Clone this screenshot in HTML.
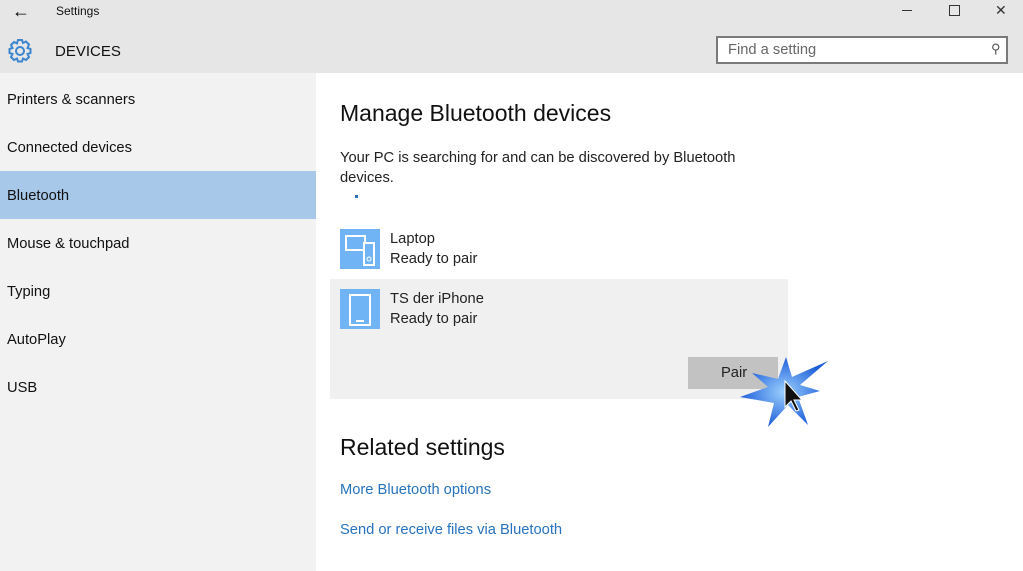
<!DOCTYPE html>
<html><head><style>
body{margin:0;width:1023px;height:571px;overflow:hidden;background:#fff;font-family:"Liberation Sans",sans-serif;position:relative}
.a{position:absolute}
.top{left:0;top:0;width:1023px;height:73px;background:#e6e6e6}
.side{left:0;top:73px;width:316px;height:498px;background:#f2f2f2}
.nav{left:7px;font-size:14.7px;color:#111}
.sel{left:0;top:171px;width:316px;height:48px;background:#a7c8e9}
.ic{width:40px;height:40px;background:#70b4f5}
.t{font-size:14.7px;color:#222}
.lk{font-size:14.7px;color:#2773bd}
</style></head><body>
<div class="a top"></div>
<div class="a side"></div>
<div class="a" style="left:12px;top:1px;font-size:18px">←</div>
<div class="a" style="left:56px;top:4px;font-size:12px;color:#111">Settings</div>
<div class="a" style="left:902px;top:10px;width:10px;height:1px;background:#333"></div>
<div class="a" style="left:949px;top:5px;width:9px;height:9px;border:1px solid #333"></div>
<div class="a" style="left:995px;top:2px;font-size:14px;color:#333">✕</div>
<svg class="a" style="left:7px;top:38px" width="26" height="26" viewBox="0 0 26 26"><g fill="none" stroke="#3c86cf" stroke-width="2"><circle cx="13" cy="13" r="4"/><path d="M11 2h4l1 3 3-1.5 3 3L20.5 10l3 1v4l-3 1 1.5 3-3 3-3-1.5-1 3h-4l-1-3-3 1.5-3-3L5.5 16l-3-1v-4l3-1L4 7l3-3 3 1.5z"/></g></svg>
<div class="a" style="left:55px;top:43px;font-size:15px;color:#111">DEVICES</div>
<div class="a" style="left:716px;top:36px;width:292px;height:28px;border:2px solid #7a7a7a;background:#fff;box-sizing:border-box"></div>
<div class="a" style="left:728px;top:42px;font-size:14.7px;color:#666">Find a setting</div>
<div class="a" style="left:991px;top:41px;font-size:13px;color:#555">⚲</div>
<div class="a sel"></div>
<div class="a nav" style="top:92px">Printers &amp; scanners</div>
<div class="a nav" style="top:140px">Connected devices</div>
<div class="a nav" style="top:188px">Bluetooth</div>
<div class="a nav" style="top:236px">Mouse &amp; touchpad</div>
<div class="a nav" style="top:284px">Typing</div>
<div class="a nav" style="top:332px">AutoPlay</div>
<div class="a nav" style="top:380px">USB</div>
<div class="a" style="left:340px;top:100px;font-size:23px;color:#111">Manage Bluetooth devices</div>
<div class="a t" style="left:340px;top:148px;width:410px;line-height:20px">Your PC is searching for and can be discovered by Bluetooth devices.</div>
<div class="a" style="left:355px;top:195px;width:3px;height:3px;background:#2773bd"></div>
<div class="a ic" style="left:340px;top:229px"><svg width="40" height="40"><rect x="6" y="7" width="19" height="14" fill="none" stroke="#fff" stroke-width="2"/><rect x="24" y="14" width="10" height="22" fill="#70b4f5" stroke="#fff" stroke-width="2"/><circle cx="29" cy="30" r="2" fill="none" stroke="#fff"/></svg></div>
<div class="a t" style="left:390px;top:231px">Laptop</div>
<div class="a t" style="left:390px;top:251px">Ready to pair</div>
<div class="a" style="left:330px;top:279px;width:458px;height:120px;background:#f0f0f0"></div>
<div class="a ic" style="left:340px;top:289px"><svg width="40" height="40"><rect x="10" y="6" width="20" height="30" fill="none" stroke="#fff" stroke-width="2"/><rect x="16" y="31" width="8" height="2" fill="#fff"/></svg></div>
<div class="a t" style="left:390px;top:291px">TS der iPhone</div>
<div class="a t" style="left:390px;top:311px">Ready to pair</div>
<div class="a" style="left:688px;top:357px;width:90px;height:32px;background:#c2c2c2"></div>
<div class="a t" style="left:721px;top:365px">Pair</div>
<svg class="a" style="left:738px;top:355px" width="95" height="75" viewBox="0 0 95 75"><defs><radialGradient id="g"><stop offset="0" stop-color="#9cd0ff"/><stop offset="1" stop-color="#1e5fd8"/></radialGradient></defs><path d="M48 2 54 22 90 6 62 30 82 36 60 42 70 70 50 50 30 72 36 48 2 42 30 32 14 18 40 24z" fill="url(#g)"/><path d="M47 26v26l6-6 5 10 3-1-5-10h8z" fill="#111" stroke="#fff" stroke-width="1"/></svg>
<div class="a" style="left:340px;top:434px;font-size:23px;color:#111">Related settings</div>
<div class="a lk" style="left:340px;top:482px">More Bluetooth options</div>
<div class="a lk" style="left:340px;top:522px">Send or receive files via Bluetooth</div>
</body></html>
